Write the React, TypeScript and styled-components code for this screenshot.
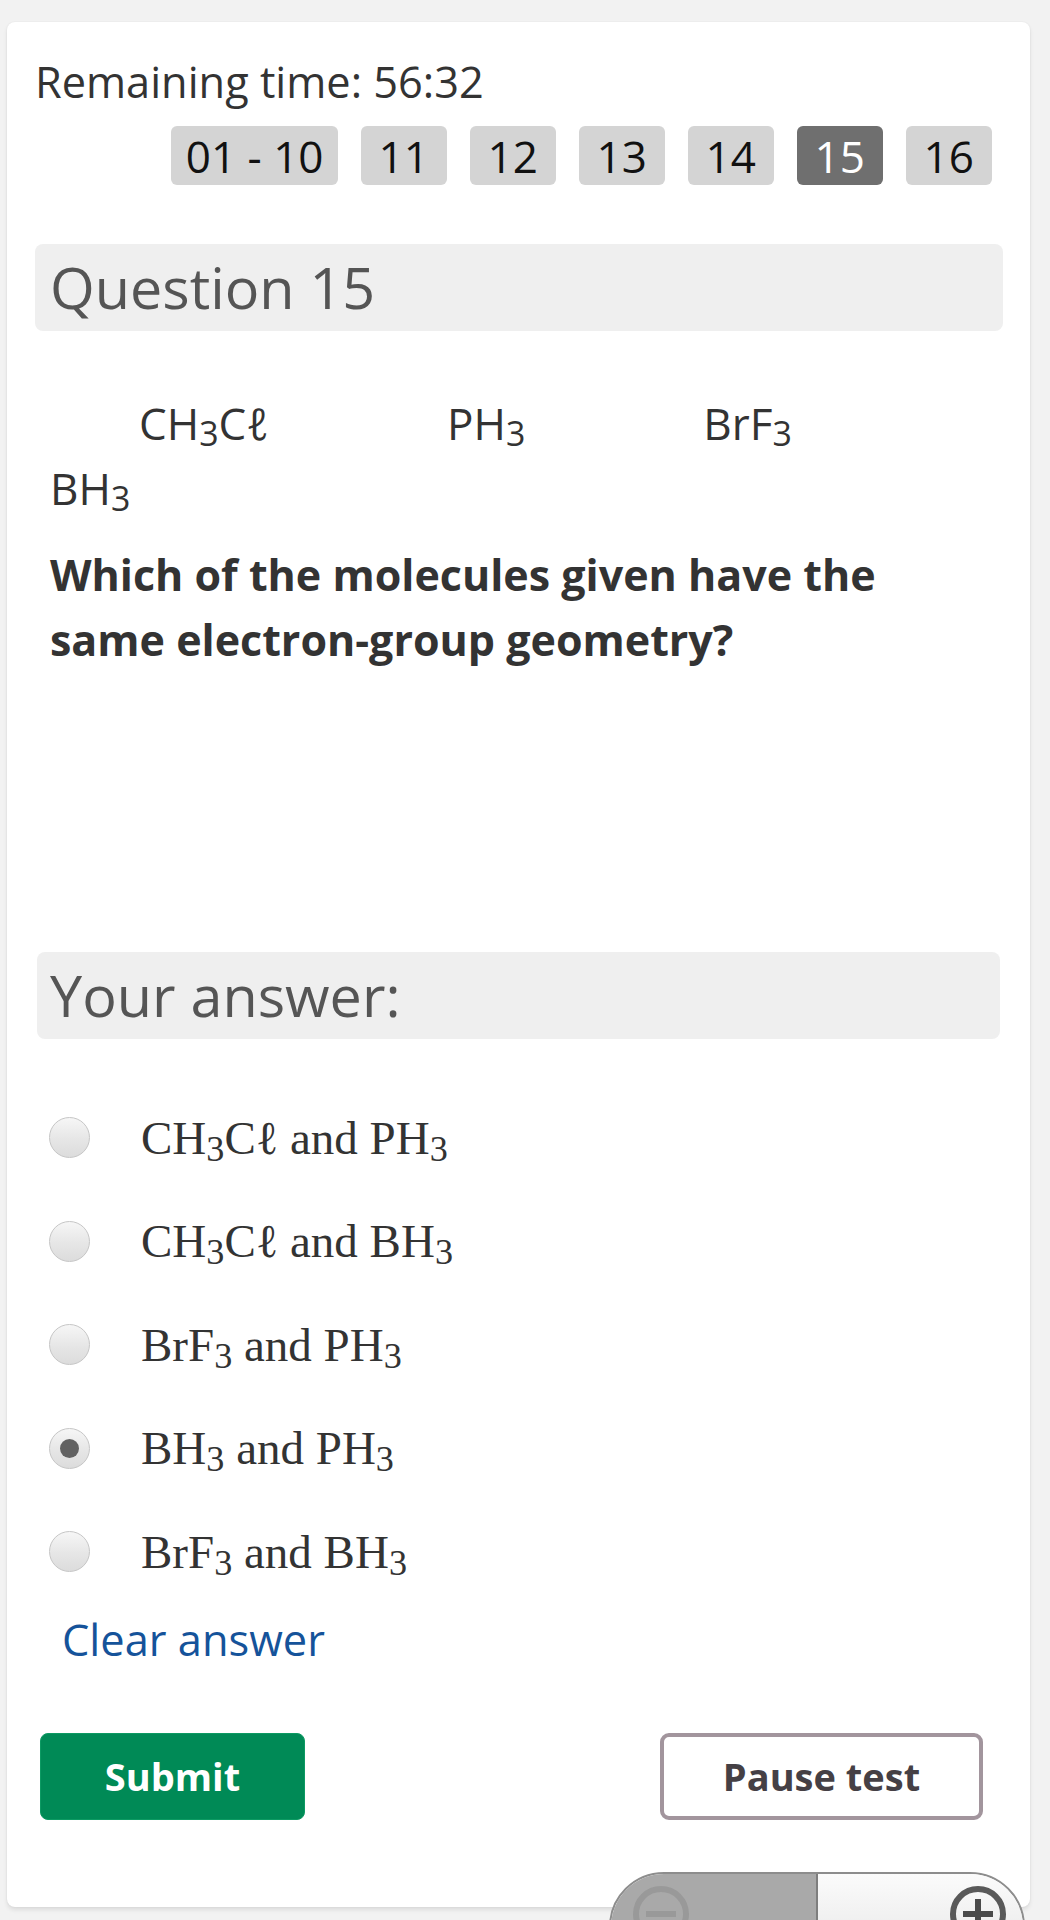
import React from "react";
import styled, { createGlobalStyle } from "styled-components";

const GlobalStyle = createGlobalStyle`
  html, body {
    margin: 0;
    padding: 0;
    background: #f2f2f2;
  }
  body {
    font-family: "Open Sans", "Liberation Sans", sans-serif;
    overflow: hidden;
  }
`;

const Page = styled.div`
  position: relative;
  box-sizing: border-box;
  height: 1920px;
  padding: 22px 20px 0 7px;
`;

const Card = styled.main`
  box-sizing: border-box;
  min-height: 1885px;
  padding: 31px 27px 0 28px;
  background: #ffffff;
  border-radius: 8px;
  box-shadow: 0 3px 4px rgba(0, 0, 0, 0.09), 0 0 2px rgba(0, 0, 0, 0.07);
`;

const Timer = styled.p`
  margin: 0;
  font-size: 43.3px;
  line-height: 58px;
  color: #333333;
`;

const NavRow = styled.nav`
  display: flex;
  justify-content: flex-end;
  gap: 22.5px;
  margin-top: 15px;
  padding-right: 11px;
`;

const NavButton = styled.button<{ $active?: boolean }>`
  box-sizing: border-box;
  display: flex;
  align-items: center;
  justify-content: center;
  height: 59px;
  min-width: 86.5px;
  padding: 0 14.5px;
  border: none;
  border-radius: 6px;
  background: ${(p) => (p.$active ? "#6f6f6f" : "#d4d4d4")};
  color: ${(p) => (p.$active ? "#ffffff" : "#111111")};
  font-family: inherit;
  font-size: 44px;
  line-height: 1;
`;

const SectionHeader = styled.h2<{ $top: number; $inset?: boolean }>`
  margin: ${(p) => p.$top}px ${(p) => (p.$inset ? "3px" : "0")} 0
    ${(p) => (p.$inset ? "2px" : "0")};
  height: 87px;
  padding: 0 ${(p) => (p.$inset ? "13px" : "15px")};
  background: #efefef;
  border-radius: 8px;
  font-size: 57.5px;
  font-weight: 400;
  line-height: 87px;
  color: #555555;
`;

const QuestionBody = styled.section`
  padding: 0 15px;
`;

const FormulaRow = styled.div<{ $top: number }>`
  margin-top: ${(p) => p.$top}px;
  font-size: 44px;
  line-height: 65px;
  color: #333333;
  white-space: nowrap;
`;

const Formula = styled.span<{ $pad: number }>`
  display: inline-block;
  padding: 0 ${(p) => p.$pad}px;
`;

const Sub = styled.sub`
  font-size: 0.77em;
  vertical-align: -0.18em;
  line-height: 0;
`;

const Prompt = styled.p`
  margin: 21px 0 0;
  font-size: 43px;
  font-weight: 700;
  line-height: 65px;
  color: #333333;
`;

const OptionList = styled.div`
  margin-top: 47px;
  padding-left: 14px;
`;

const OptionRow = styled.label`
  display: flex;
  align-items: center;
  gap: 51px;
  height: 103.5px;
  font-family: "Liberation Serif", "DejaVu Serif", serif;
  font-size: 47px;
  color: #333333;
`;

const Radio = styled.span<{ $checked?: boolean }>`
  position: relative;
  box-sizing: border-box;
  flex: 0 0 41px;
  width: 41px;
  height: 41px;
  border-radius: 50%;
  border: 1.5px solid #c6c6c6;
  background: linear-gradient(180deg, #f6f6f6 0%, #e6e6e6 55%, #dcdcdc 100%);
  &::after {
    content: "";
    display: ${(p) => (p.$checked ? "block" : "none")};
    position: absolute;
    left: 50%;
    top: 50%;
    width: 19px;
    height: 19px;
    margin: -9.5px 0 0 -9.5px;
    border-radius: 50%;
    background: #626262;
  }
`;

const ClearLink = styled.a`
  display: inline-block;
  margin: 7px 0 0 27px;
  font-size: 43.4px;
  line-height: 58px;
  color: #15539a;
  text-decoration: none;
`;

const ButtonRow = styled.div`
  display: flex;
  justify-content: space-between;
  align-items: flex-start;
  margin-top: 64px;
  padding: 0 20px 0 5px;
`;

const SubmitButton = styled.button`
  width: 265px;
  height: 87px;
  border: 1px solid #0d9a63;
  border-radius: 8px;
  background: #008a56;
  color: #ffffff;
  font-family: inherit;
  font-size: 38px;
  font-weight: 700;
`;

const PauseButton = styled.button`
  box-sizing: border-box;
  width: 323px;
  height: 87px;
  border: 4px solid #a2959d;
  border-radius: 9px;
  background: #ffffff;
  color: #454045;
  font-family: inherit;
  font-size: 38px;
  font-weight: 700;
`;

const ZoomDock = styled.div`
  position: absolute;
  left: 600px;
  top: 1872px;
  width: 440px;
  height: 48px;
  overflow: hidden;
`;

const ZoomPill = styled.div`
  display: flex;
  margin-left: 9px;
  width: 416px;
  height: 110px;
  border-radius: 55px;
  overflow: hidden;
  border: 2px solid #8d8d8d;
  box-sizing: border-box;
`;

const ZoomHalf = styled.div<{ $dark?: boolean }>`
  position: relative;
  flex: 1;
  background: ${(p) =>
    p.$dark ? "#a9a9a9" : "linear-gradient(180deg, #fbfbfb 0%, #ececec 60%, #dedede 100%)"};
  border-left: ${(p) => (p.$dark ? "none" : "2px solid #7e7e7e")};
`;

const ZoomIcon = styled.svg<{ $left: number }>`
  position: absolute;
  top: 10px;
  left: ${(p) => p.$left}px;
  width: 60px;
  height: 60px;
`;

const options: { key: string; content: React.ReactNode; checked?: boolean }[] = [
  {
    key: "a",
    content: (
      <>
        CH<Sub>3</Sub>Cℓ and PH<Sub>3</Sub>
      </>
    ),
  },
  {
    key: "b",
    content: (
      <>
        CH<Sub>3</Sub>Cℓ and BH<Sub>3</Sub>
      </>
    ),
  },
  {
    key: "c",
    content: (
      <>
        BrF<Sub>3</Sub> and PH<Sub>3</Sub>
      </>
    ),
  },
  {
    key: "d",
    content: (
      <>
        BH<Sub>3</Sub> and PH<Sub>3</Sub>
      </>
    ),
    checked: true,
  },
  {
    key: "e",
    content: (
      <>
        BrF<Sub>3</Sub> and BH<Sub>3</Sub>
      </>
    ),
  },
];

const navItems = ["01 - 10", "11", "12", "13", "14", "15", "16"];

export default function App() {
  return (
    <>
      <GlobalStyle />
      <Page>
        <Card>
          <Timer>Remaining time: 56:32</Timer>
          <NavRow>
            {navItems.map((n) => (
              <NavButton key={n} $active={n === "15"}>
                {n}
              </NavButton>
            ))}
          </NavRow>

          <SectionHeader $top={59}>Question 15</SectionHeader>

          <QuestionBody>
            <FormulaRow $top={60}>
              <Formula $pad={89}>
                CH<Sub>3</Sub>Cℓ
              </Formula>
              <Formula $pad={89}>
                PH<Sub>3</Sub>
              </Formula>
              <Formula $pad={89}>
                BrF<Sub>3</Sub>
              </Formula>
            </FormulaRow>
            <FormulaRow $top={0}>
              <Formula $pad={0}>
                BH<Sub>3</Sub>
              </Formula>
            </FormulaRow>
            <Prompt>
              Which of the molecules given have the
              <br />
              same electron-group geometry?
            </Prompt>
          </QuestionBody>

          <SectionHeader $top={280} $inset>
            Your answer:
          </SectionHeader>

          <OptionList>
            {options.map((o) => (
              <OptionRow key={o.key}>
                <Radio $checked={o.checked} />
                <span>{o.content}</span>
              </OptionRow>
            ))}
          </OptionList>

          <ClearLink href="#">Clear answer</ClearLink>

          <ButtonRow>
            <SubmitButton>Submit</SubmitButton>
            <PauseButton>Pause test</PauseButton>
          </ButtonRow>
        </Card>

        <ZoomDock>
          <ZoomPill>
            <ZoomHalf $dark>
              <ZoomIcon $left={20} viewBox="0 0 60 60">
                <circle cx="30" cy="30" r="25" fill="none" stroke="#999999" strokeWidth="6" />
                <rect x="15" y="27" width="30" height="6" fill="#999999" />
              </ZoomIcon>
            </ZoomHalf>
            <ZoomHalf>
              <ZoomIcon $left={130} viewBox="0 0 60 60">
                <circle cx="30" cy="30" r="25" fill="none" stroke="#595959" strokeWidth="6" />
                <rect x="15" y="27" width="30" height="6" fill="#4a4a4a" />
                <rect x="27" y="15" width="6" height="30" fill="#4a4a4a" />
              </ZoomIcon>
            </ZoomHalf>
          </ZoomPill>
        </ZoomDock>
      </Page>
    </>
  );
}
